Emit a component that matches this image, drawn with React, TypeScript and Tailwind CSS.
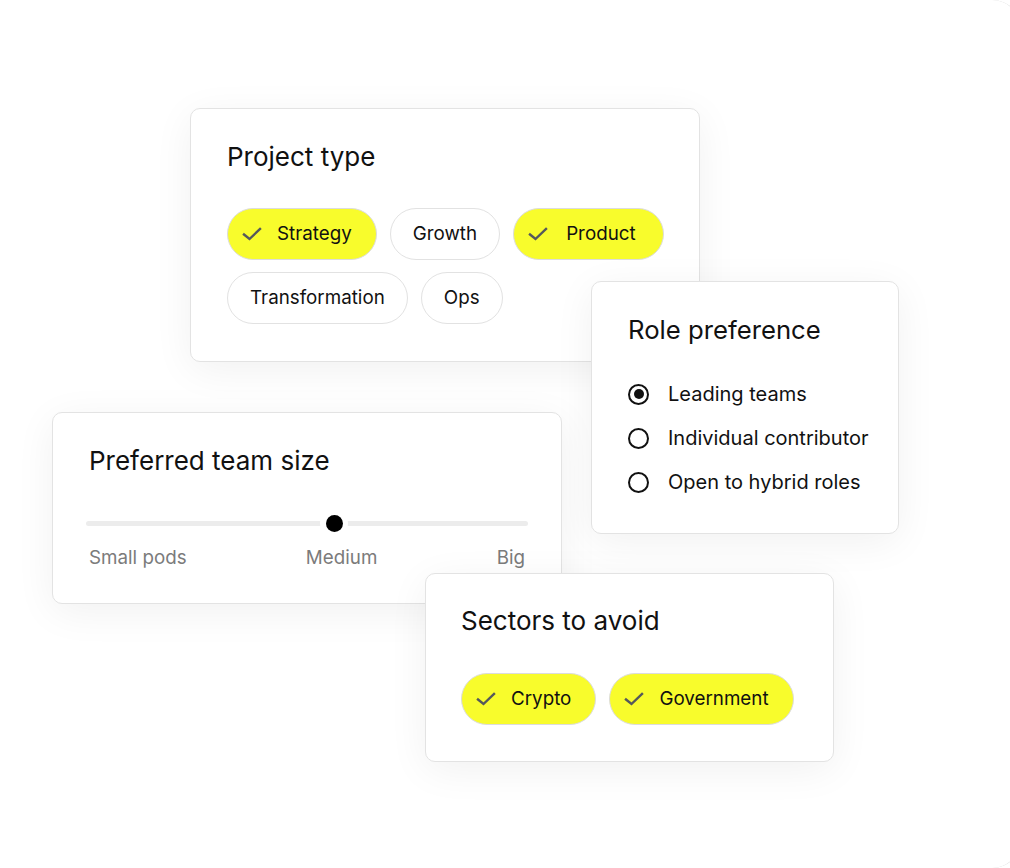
import React from "react";

function Check() {
  return (
    <svg width="20" height="14" viewBox="0 0 20 14" fill="none" className="shrink-0">
      <path d="M2 7.5 L7.5 12 L18 2" stroke="#55585c" strokeWidth="2.4" strokeLinecap="square" strokeLinejoin="miter" />
    </svg>
  );
}

function Chip({ label, selected, wide }: { label: string; selected?: boolean; wide?: boolean }) {
  if (selected) {
    return (
      <div
        className={
          "h-[52px] rounded-full border border-[#dcdcdc] bg-[#f8fc2c] flex items-center pl-[14px] text-[18.8px] leading-[24px] text-[#111] whitespace-nowrap " +
          (wide ? "gap-[18px] pr-[27px]" : "gap-[15px] pr-[24px]")
        }
      >
        <Check />
        <span>{label}</span>
      </div>
    );
  }
  return (
    <div className="h-[52px] rounded-full border border-[#e2e2e2] bg-white flex items-center px-[22px] text-[18.8px] leading-[24px] text-[#111] whitespace-nowrap">
      {label}
    </div>
  );
}

function Radio({ label, checked }: { label: string; checked?: boolean }) {
  return (
    <div className="h-[24px] flex items-center gap-[19px] whitespace-nowrap">
      <div className="w-[21px] h-[21px] rounded-full border-2 border-[#111] flex items-center justify-center shrink-0">
        {checked && <div className="w-[10px] h-[10px] rounded-full bg-[#111]" />}
      </div>
      <span className="text-[20px] leading-[24px] text-[#111] whitespace-nowrap">{label}</span>
    </div>
  );
}

const card =
  "absolute bg-white border border-[#e3e3e3] rounded-[10px] shadow-[0_8px_40px_rgba(0,0,0,0.06)] flex flex-col";

export default function App() {
  return (
    <div className="relative w-full h-[868px] overflow-hidden bg-white font-[Inter,sans-serif] text-[#111]">
      <div className="absolute top-0 right-[-12px] w-[200px] h-[868px] rounded-r-[30px] border-r border-[#d6d6d6]" />

      {/* Project type */}
      <div className={card + " left-[190px] top-[108px] w-[510px] h-[254px] px-[36px] pt-[32px]"}>
        <div className="text-[26px] leading-[32px]">Project type</div>
        <div className="mt-[35px] flex flex-col gap-[12px]">
          <div className="flex gap-[13px]">
            <Chip label="Strategy" selected />
            <Chip label="Growth" />
            <Chip label="Product" selected wide />
          </div>
          <div className="flex gap-[13px]">
            <Chip label="Transformation" />
            <Chip label="Ops" />
          </div>
        </div>
      </div>

      {/* Role preference */}
      <div className={card + " left-[591px] top-[281px] w-[308px] h-[253px] px-[36px] pt-[32px]"}>
        <div className="text-[25.7px] leading-[32px] whitespace-nowrap">Role preference</div>
        <div className="mt-[36px] flex flex-col gap-[20px]">
          <Radio label="Leading teams" checked />
          <Radio label="Individual contributor" />
          <Radio label="Open to hybrid roles" />
        </div>
      </div>

      {/* Preferred team size */}
      <div className={card + " left-[52px] top-[412px] w-[510px] h-[192px] px-[36px] pt-[32px]"}>
        <div className="text-[26px] leading-[32px]">Preferred team size</div>
        <div className="mt-[32px] mx-[-3px] relative h-[28px] flex items-center">
          <div className="w-full h-[5px] rounded-full bg-[#ececec]" />
          <div className="absolute left-[234px] top-0 w-[28px] h-[28px] rounded-full bg-white flex items-center justify-center">
            <div className="w-[17px] h-[17px] rounded-full bg-black" />
          </div>
        </div>
        <div className="mt-[9px] flex justify-between text-[18.8px] leading-[24px] text-[#7b7b7b]">
          <span>Small pods</span>
          <span>Medium</span>
          <span>Big</span>
        </div>
      </div>

      {/* Sectors to avoid */}
      <div className={card + " left-[425px] top-[573px] w-[409px] h-[189px] px-[35px] pt-[31px]"}>
        <div className="text-[26px] leading-[32px]">Sectors to avoid</div>
        <div className="mt-[36px] flex gap-[13px]">
          <Chip label="Crypto" selected />
          <Chip label="Government" selected />
        </div>
      </div>
    </div>
  );
}
